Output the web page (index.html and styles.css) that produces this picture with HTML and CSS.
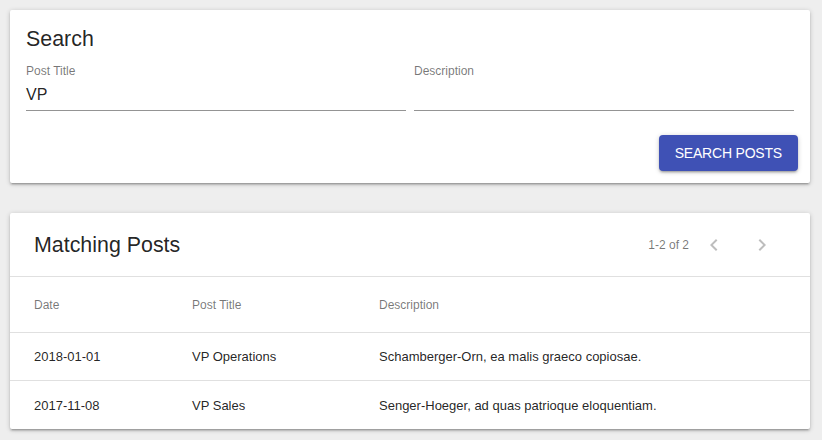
FILE: index.html
```html
<!DOCTYPE html>
<html lang="en">
<head>
<meta charset="utf-8">
<title>Search Posts</title>
<link rel="stylesheet" href="styles.css">
</head>
<body>
<div class="page">
  <section class="card search-card">
    <div class="card-content">
      <h2 class="card-title">Search</h2>
      <div class="fields">
        <label class="field">
          <span class="field-label">Post Title</span>
          <span class="field-input">VP</span>
        </label>
        <label class="field">
          <span class="field-label">Description</span>
          <span class="field-input"></span>
        </label>
      </div>
    </div>
    <div class="card-actions">
      <button class="btn-primary" type="button">SEARCH POSTS</button>
    </div>
  </section>

  <section class="card results-card">
    <div class="toolbar">
      <h2 class="toolbar-title">Matching Posts</h2>
      <div class="pagination">
        <span class="page-caption">1-2 of 2</span>
        <button class="icon-btn" type="button" aria-label="Previous page">
          <svg viewBox="0 0 24 24" width="24" height="24"><path d="M15.41 7.41L14 6l-6 6 6 6 1.41-1.41L10.83 12z"/></svg>
        </button>
        <button class="icon-btn" type="button" aria-label="Next page">
          <svg viewBox="0 0 24 24" width="24" height="24"><path d="M10 6L8.59 7.41 13.17 12l-4.58 4.59L10 18l6-6z"/></svg>
        </button>
      </div>
    </div>
    <div class="table">
      <div class="row head">
        <div class="cell">Date</div>
        <div class="cell">Post Title</div>
        <div class="cell">Description</div>
      </div>
      <div class="row">
        <div class="cell">2018-01-01</div>
        <div class="cell">VP Operations</div>
        <div class="cell">Schamberger-Orn, ea malis graeco copiosae.</div>
      </div>
      <div class="row last">
        <div class="cell">2017-11-08</div>
        <div class="cell">VP Sales</div>
        <div class="cell">Senger-Hoeger, ad quas patrioque eloquentiam.</div>
      </div>
    </div>
  </section>
</div>
</body>
</html>
```

FILE: styles.css
```css
* { box-sizing: border-box; }

html, body {
  margin: 0;
  padding: 0;
  background: #eeeeee;
}

body {
  font-family: "Liberation Sans", Arial, Helvetica, sans-serif;
  color: rgba(0, 0, 0, 0.87);
}

.page {
  padding: 10px 12px 10px 10px;
  display: flex;
  flex-direction: column;
  gap: 30px;
}

.card {
  background: #fff;
  border-radius: 2px;
  width: 800px;
  box-shadow: 0px 1px 5px 0px rgba(0,0,0,0.2), 0px 2px 2px 0px rgba(0,0,0,0.14), 0px 3px 1px -2px rgba(0,0,0,0.12);
}

.card-content {
  padding: 17px 16px 0 16px;
}

.card-title {
  margin: 0;
  font-size: 21.4px;
  font-weight: normal;
  line-height: 24px;
  color: rgba(0, 0, 0, 0.87);
}

.fields {
  margin-top: 12px;
  display: flex;
  gap: 8px;
}

.field {
  flex: 1 1 0;
  display: flex;
  flex-direction: column;
}

.field-label {
  font-size: 12px;
  line-height: 16px;
  color: rgba(0, 0, 0, 0.54);
}

.field-input {
  display: block;
  font-size: 16px;
  line-height: 19px;
  height: 32px;
  padding: 6px 0 6px 0;
  border-bottom: 1px solid rgba(0, 0, 0, 0.42);
  color: rgba(0, 0, 0, 0.87);
}

.card-actions {
  display: flex;
  justify-content: flex-end;
  padding: 24px 12px 12px 12px;
}

.btn-primary {
  font-family: inherit;
  font-size: 14px;
  letter-spacing: -0.2px;
  height: 36px;
  padding: 0 16px;
  border: none;
  border-radius: 4px;
  background: #3f51b5;
  color: #fff;
  box-shadow: 0px 1px 5px 0px rgba(0,0,0,0.2), 0px 2px 2px 0px rgba(0,0,0,0.14), 0px 3px 1px -2px rgba(0,0,0,0.12);
  cursor: pointer;
}

.toolbar {
  height: 64px;
  padding: 0 24px;
  display: flex;
  align-items: center;
  justify-content: space-between;
  border-bottom: 1px solid #e0e0e0;
}

.toolbar-title {
  margin: 0;
  font-size: 21.4px;
  font-weight: normal;
  line-height: 24px;
  color: rgba(0, 0, 0, 0.87);
}

.pagination {
  display: flex;
  align-items: center;
}

.page-caption {
  font-size: 12px;
  color: rgba(0, 0, 0, 0.54);
  margin-right: 1px;
}

.icon-btn {
  width: 48px;
  height: 48px;
  padding: 0;
  border: none;
  background: transparent;
  display: flex;
  align-items: center;
  justify-content: center;
}

.icon-btn svg {
  fill: rgba(0, 0, 0, 0.26);
  display: block;
}

.row {
  display: grid;
  grid-template-columns: 158px 187px 1fr;
  height: 48px;
  align-items: center;
  border-bottom: 1px solid #e0e0e0;
  font-size: 13px;
  color: rgba(0, 0, 0, 0.87);
}

.row.head {
  height: 56px;
  font-size: 12px;
  color: rgba(0, 0, 0, 0.54);
}

.row.last {
  border-bottom: none;
}

.cell {
  padding-left: 24px;
}
```
